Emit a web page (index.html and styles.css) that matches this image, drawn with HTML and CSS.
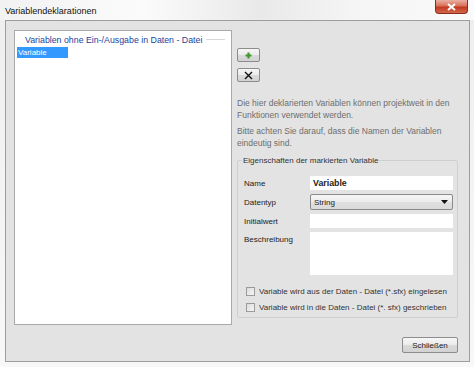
FILE: index.html
```html
<!DOCTYPE html>
<html lang="de">
<head>
    <meta charset="UTF-8">
    <meta name="viewport" content="width=device-width, initial-scale=1.0">
    <title>Variablendeklarationen</title>
    <link rel="stylesheet" href="styles.css">
</head>
<body>
    <div class="window">
        <div class="titlebar">
            <span class="title">Variablendeklarationen</span>
            <span class="close-x">
                <svg width="11" height="8" viewBox="0 0 11 8"><path d="M2 1 L9 7 M9 1 L2 7" stroke="#fff" stroke-width="2"/></svg>
            </span>
        </div>
        <div class="panel">
            <div class="main">
                <div class="listbox">
                    <div class="list-head"><span>Variablen ohne Ein-/Ausgabe in Daten - Datei</span><i></i></div>
                    <div class="list-item selected">Variable</div>
                </div>

                <div class="side">
                    <div class="tools">
                        <button type="button" class="tool">
                            <svg width="7" height="7" viewBox="0 0 7 7"><path d="M3.5 0.5 V6.5 M0.5 3.5 H6.5" stroke="#3e9a2c" stroke-width="2.2"/></svg>
                        </button>
                        <button type="button" class="tool">
                            <svg width="9" height="9" viewBox="0 0 9 9"><path d="M1 1 L8 8 M8 1 L1 8" stroke="#111" stroke-width="1.4"/></svg>
                        </button>
                    </div>

                    <p class="hint">Die hier deklarierten Variablen können projektweit in den Funktionen verwendet werden.</p>
                    <p class="hint">Bitte achten Sie darauf, dass die Namen der Variablen eindeutig sind.</p>

                    <fieldset class="props">
                        <legend>Eigenschaften der markierten Variable</legend>
                        <div class="form-grid">
                            <label>Name</label>
                            <div class="field h-name"><b>Variable</b></div>

                            <label>Datentyp</label>
                            <div class="select">String
                                <svg width="7" height="4" viewBox="0 0 7 4"><path d="M0 0 H7 L3.5 4 Z" fill="#111"/></svg>
                            </div>

                            <label>Initialwert</label>
                            <div class="field h-init"></div>

                            <label class="top">Beschreibung</label>
                            <div class="field h-desc"></div>
                        </div>

                        <div class="check"><span class="box"></span>Variable wird aus der Daten - Datei (*.sfx) eingelesen</div>
                        <div class="check"><span class="box"></span>Variable wird in die Daten - Datei (*. sfx) geschrieben</div>
                    </fieldset>
                </div>
            </div>

            <div class="footer">
                <button type="button" class="btn">Schließen</button>
            </div>
        </div>
    </div>
</body>
</html>
```

FILE: styles.css
```css
body {
    margin: 0;
    background: #f6f6f6;
    font-family: 'Liberation Sans', Arial, sans-serif;
    font-size: 8px;
    color: #222;
}
.window {
    width: 474px;
    height: 367px;
    background: linear-gradient(180deg, #f9f9f9 0%, #efefef 6%, #f8f8f8 100%);
}
.titlebar {
    height: 20px;
    display: flex;
    justify-content: space-between;
    align-items: flex-start;
    background: linear-gradient(90deg, #f2f2f2 0%, #fbfbfb 30%, #e9e9e9 55%, #f5f5f5 75%, #fafafa 100%);
}
.title {
    margin: 6px 0 0 5px;
    font-size: 9px;
    color: #111;
}
.close-x {
    width: 33px;
    height: 14px;
    margin-right: 6px;
    box-sizing: border-box;
    display: flex;
    align-items: center;
    justify-content: center;
    border: 1px solid #8b2b1b;
    border-top: none;
    border-radius: 0 0 4px 4px;
    background: linear-gradient(180deg, #eab1a2 0%, #d8705a 45%, #c23a22 55%, #d2664a 100%);
}
.panel {
    width: 465px;
    height: 342px;
    margin-left: 5px;
    box-sizing: border-box;
    border: 1px solid #9d9d9d;
    background: #e3e3e3;
    padding: 9px 0 0 8px;
}
.main {
    display: flex;
    gap: 5px;
}
.listbox {
    width: 218px;
    height: 295px;
    box-sizing: border-box;
    border: 1px solid #a9a9a9;
    background: #fff;
    padding: 3px 2px 0 2px;
}
.list-head {
    display: flex;
    align-items: center;
    gap: 4px;
    padding-left: 8px;
    height: 11px;
    color: #1d3f9c;
    font-size: 8.8px;
    white-space: nowrap;
}
.list-head span {
    flex-shrink: 0;
}
.list-head i {
    flex: 1 1 auto;
    max-width: 28px;
    margin-right: 4px;
    border-top: 1px solid #d8d8d8;
}
.list-item {
    width: 51px;
    height: 11px;
    line-height: 11px;
    margin-top: 2px;
    padding-left: 1px;
    box-sizing: border-box;
}
.list-item.selected {
    background: #3399ff;
    color: #fff;
}
.side {
    width: 221px;
}
.tools {
    display: flex;
    flex-direction: column;
    gap: 6px;
    margin-top: 18px;
}
.tool {
    width: 23px;
    height: 14px;
    padding: 0;
    display: flex;
    align-items: center;
    justify-content: center;
    border: 1px solid #8c8c8c;
    border-radius: 2px;
    background: linear-gradient(180deg, #f6f6f6 0%, #ebebeb 50%, #dadada 51%, #d2d2d2 100%);
}
.hint {
    margin: 15px 0 0 0;
    line-height: 12px;
    font-size: 8.5px;
    color: #6e6e6e;
}
.hint + .hint {
    margin-top: 4px;
}
.props {
    margin: 7px 0 0 0;
    padding: 11px 4px 5px 6px;
    border: 1px solid #cfcfcf;
    border-radius: 2px;
    min-inline-size: 0;
}
.props legend {
    padding: 0 1px;
    margin-left: -2px;
    color: #333;
}
.form-grid {
    display: grid;
    grid-template-columns: 66px 143px;
    row-gap: 4px;
    align-items: center;
}
.form-grid label {
    color: #222;
}
.form-grid label.top {
    align-self: start;
    padding-top: 3px;
}
.field {
    height: 14px;
    background: #fff;
    box-sizing: border-box;
    padding-left: 3px;
    line-height: 14px;
    font-size: 8.8px;
}
.field.h-desc {
    height: 43px;
}
.select {
    height: 16px;
    box-sizing: border-box;
    border: 1px solid #8a8a8a;
    border-radius: 2px;
    background: linear-gradient(180deg, #f5f5f5 0%, #ececec 50%, #e0e0e0 51%, #dadada 100%);
    display: flex;
    align-items: center;
    justify-content: space-between;
    padding: 0 4px 0 3px;
}
.check {
    display: flex;
    align-items: center;
    gap: 4px;
    margin-left: 2px;
    height: 9px;
    margin-top: 7px;
    color: #333;
}
.form-grid + .check {
    margin-top: 12px;
}
.box {
    width: 9px;
    height: 9px;
    box-sizing: border-box;
    border: 1px solid #9a9a9a;
    background: linear-gradient(135deg, #dcdcdc, #f6f6f6);
}
.footer {
    display: flex;
    justify-content: flex-end;
    padding-right: 11px;
    margin-top: 12px;
}
.btn {
    width: 56px;
    height: 16px;
    padding: 0;
    font-family: 'Liberation Sans', Arial, sans-serif;
    font-size: 8px;
    color: #222;
    border: 1px solid #8c8c8c;
    border-radius: 2px;
    background: linear-gradient(180deg, #f6f6f6 0%, #ebebeb 50%, #dadada 51%, #d2d2d2 100%);
}
```
